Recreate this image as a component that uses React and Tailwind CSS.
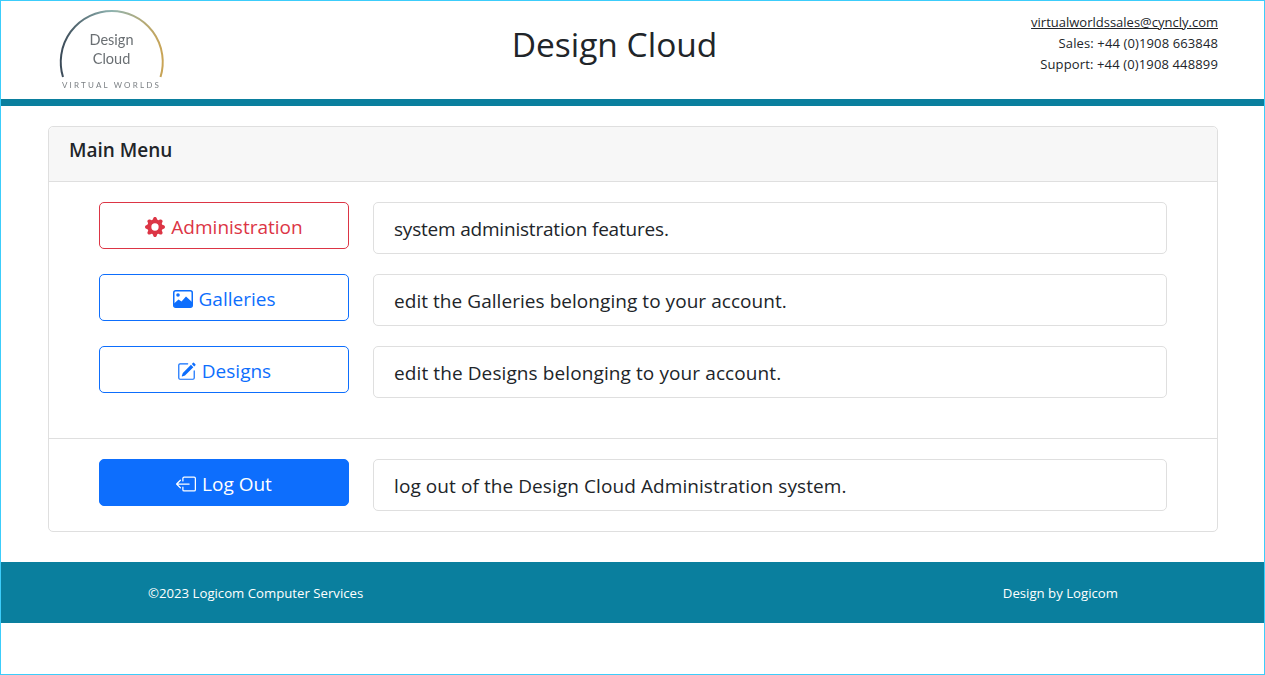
import React from 'react';
import { BsGearFill, BsPencilSquare, BsBoxArrowLeft } from 'react-icons/bs';

const Logo = () => (
  <svg width="110" height="84" viewBox="0 0 110 84" className="block blur-[0.4px]">
    <defs>
      <linearGradient id="arc" x1="0" y1="0" x2="1" y2="0">
        <stop offset="0" stopColor="#3b4a58" />
        <stop offset="0.5" stopColor="#8fb3b0" />
        <stop offset="1" stopColor="#c9a455" />
      </linearGradient>
    </defs>
    <path d="M5 69 A51 51 0 1 1 102.5 69" fill="none" stroke="url(#arc)" strokeWidth="2" />
    <text x="53.5" y="37" textAnchor="middle" fontSize="14.5" fill="#6a6f73" fontFamily="Lato, sans-serif">Design</text>
    <text x="53.5" y="56" textAnchor="middle" fontSize="14.5" fill="#6a6f73" fontFamily="Lato, sans-serif">Cloud</text>
    <text x="53.5" y="80" textAnchor="middle" fontSize="8" letterSpacing="2.2" fill="#7a7f83" fontFamily="Lato, sans-serif">VIRTUAL WORLDS</text>
  </svg>
);

// outlined frame with a filled mountain range, as in the reference
const GalleryIcon = () => (
  <svg width="20" height="18" viewBox="0 0 20 18" fill="currentColor">
    <rect x="0.75" y="0.75" width="18.5" height="16.5" rx="2" fill="none" stroke="currentColor" strokeWidth="1.5" />
    <circle cx="5" cy="5" r="1.8" />
    <path d="M1 13.5 L5.5 9.5 L8.5 11.5 L13 6.5 L19 12 V15.5 A2 2 0 0 1 17 17 H3 A2 2 0 0 1 1 15.5 Z" />
  </svg>
);

const MenuRow = ({ icon, label, text, btnClass, textClass }) => (
  <div className="flex items-start gap-6">
    <button className={`w-[250px] h-[47px] flex items-center justify-center gap-[6px] pt-[3px] rounded-[5px] border text-[19px] ${btnClass}`}>
      {icon}
      {label}
    </button>
    <div className={`flex-1 h-[52px] flex items-center px-5 pt-[3px] border border-[#dfdfdf] rounded-[5px] text-[19px] text-[#212529] ${textClass}`}>
      {text}
    </div>
  </div>
);

export default function App() {
  return (
    <div className="min-h-[675px] bg-white border border-[#3ccdfb] text-[#212529] font-['Open_Sans',sans-serif]">
      {/* Header */}
      <header className="h-[98px] flex items-start pl-[47px] pr-[46px]">
        <div className="w-[171px] pl-[10px] pt-[7px]">
          <Logo />
        </div>
        <div className="flex-1 text-center text-[33.5px] leading-[44px] pt-[21px]">Design Cloud</div>
        <div className="w-[208px] pt-[11px] text-right text-[13px] leading-[21px]">
          <a href="#" className="underline block">virtualworldssales@cyncly.com</a>
          <div className="tracking-[0.12px]">Sales: +44 (0)1908 663848</div>
          <div className="tracking-[0.14px]">Support: +44 (0)1908 448899</div>
        </div>
      </header>
      <div className="h-[7px] bg-[#0a7f9e]" />

      {/* Main menu card */}
      <main className="pl-[47px] pr-[46px] pt-5">
        <div className="border border-[#dfdfdf] rounded-[5px]">
          <div className="h-[55px] flex items-center px-5 pb-[7px] bg-[#f7f7f7] border-b border-[#dfdfdf] rounded-t-[5px] text-[19px] font-semibold">
            Main Menu
          </div>
          <div className="px-[50px] pt-5 pb-10 border-b border-[#dfdfdf] flex flex-col gap-5">
            <MenuRow
              icon={<BsGearFill className="w-[20px] h-[20px]" />}
              label="Administration"
              text="system administration features."
              btnClass="border-[#dc3545] text-[#dc3545]"
              textClass="tracking-[-0.2px]"
            />
            <MenuRow
              icon={<GalleryIcon />}
              label="Galleries"
              text="edit the Galleries belonging to your account."
              btnClass="border-[#0d6efd] text-[#0d6efd]"
              textClass="tracking-[0.05px]"
            />
            <MenuRow
              icon={<BsPencilSquare className="w-[19px] h-[19px]" />}
              label="Designs"
              text="edit the Designs belonging to your account."
              btnClass="border-[#0d6efd] text-[#0d6efd]"
              textClass="tracking-[0.1px]"
            />
          </div>
          <div className="px-[50px] py-5">
            <MenuRow
              icon={<BsBoxArrowLeft className="w-[20px] h-[20px]" />}
              label="Log Out"
              text="log out of the Design Cloud Administration system."
              btnClass="border-[#0d6efd] bg-[#0d6efd] text-white"
              textClass="tracking-[0.08px]"
            />
          </div>
        </div>
      </main>

      {/* Footer */}
      <footer className="mt-[30px] h-[61px] bg-[#0a7f9e] text-white text-[13.2px] flex items-center justify-between pt-[2px] pl-[147px] pr-[146px]">
        <span>©2023 Logicom Computer Services</span>
        <span>Design by Logicom</span>
      </footer>
    </div>
  );
}
